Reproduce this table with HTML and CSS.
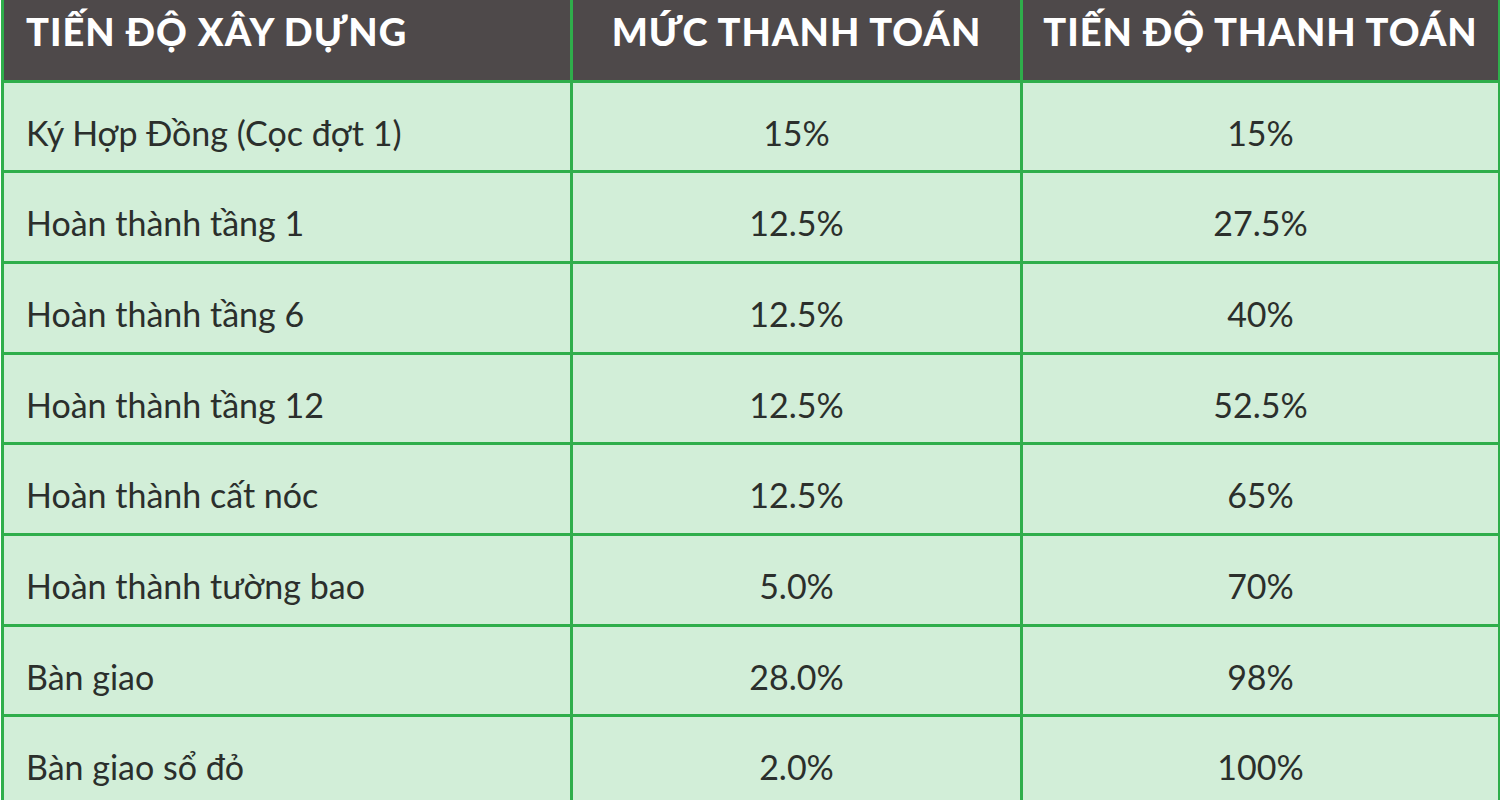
FILE: index.html
```html
<!DOCTYPE html>
<html lang="vi">
<head>
<meta charset="utf-8">
<title>Tiến độ thanh toán</title>
<link rel="stylesheet" href="styles.css">
</head>
<body>
<table class="pay-table">
  <colgroup>
    <col class="c1"><col class="c2"><col class="c3">
  </colgroup>
  <thead>
    <tr>
      <th class="left">TIẾN ĐỘ XÂY DỰNG</th>
      <th>MỨC THANH TOÁN</th>
      <th>TIẾN ĐỘ THANH TOÁN</th>
    </tr>
  </thead>
  <tbody>
    <tr><td class="left">Ký Hợp Đồng (Cọc đợt 1)</td><td>15%</td><td>15%</td></tr>
    <tr><td class="left">Hoàn thành tầng 1</td><td>12.5%</td><td>27.5%</td></tr>
    <tr><td class="left">Hoàn thành tầng 6</td><td>12.5%</td><td>40%</td></tr>
    <tr><td class="left">Hoàn thành tầng 12</td><td>12.5%</td><td>52.5%</td></tr>
    <tr><td class="left">Hoàn thành cất nóc</td><td>12.5%</td><td>65%</td></tr>
    <tr><td class="left">Hoàn thành tường bao</td><td>5.0%</td><td>70%</td></tr>
    <tr><td class="left">Bàn giao</td><td>28.0%</td><td>98%</td></tr>
    <tr><td class="left">Bàn giao sổ đỏ</td><td>2.0%</td><td>100%</td></tr>
  </tbody>
</table>
</body>
</html>
```
FILE: styles.css
```css
html, body {
  margin: 0;
  padding: 0;
  background: #ffffff;
  overflow: hidden;
}
body {
  padding-left: 1px;
  font-family: Lato, "Open Sans", "Liberation Sans", sans-serif;
}
.pay-table {
  border-collapse: collapse;
  table-layout: fixed;
  width: 1497px;
}
.c1 { width: 569px; }
.c2 { width: 450px; }
.c3 { width: 478px; }
.pay-table th,
.pay-table td {
  border: 3px solid #2fae4b;
  text-align: center;
  padding: 0;
}
.pay-table tr:first-child th { border-top: 0; }
.pay-table th {
  background: #4e494a;
  color: #ffffff;
  font-weight: 900;
  font-size: 38px;
  letter-spacing: 1px;
  height: 81px;
  vertical-align: top;
  padding-top: 9px;
  box-sizing: border-box;
  line-height: 44px;
}
.pay-table td {
  background: #d2eed8;
  color: #2b2f2c;
  font-size: 34px;
  font-weight: 400;
  letter-spacing: 0;
  height: 90.7px;
  vertical-align: top;
  padding-top: 30px;
  box-sizing: border-box;
  line-height: 40px;
}
.pay-table .left {
  text-align: left;
  padding-left: 22px;
}
```
